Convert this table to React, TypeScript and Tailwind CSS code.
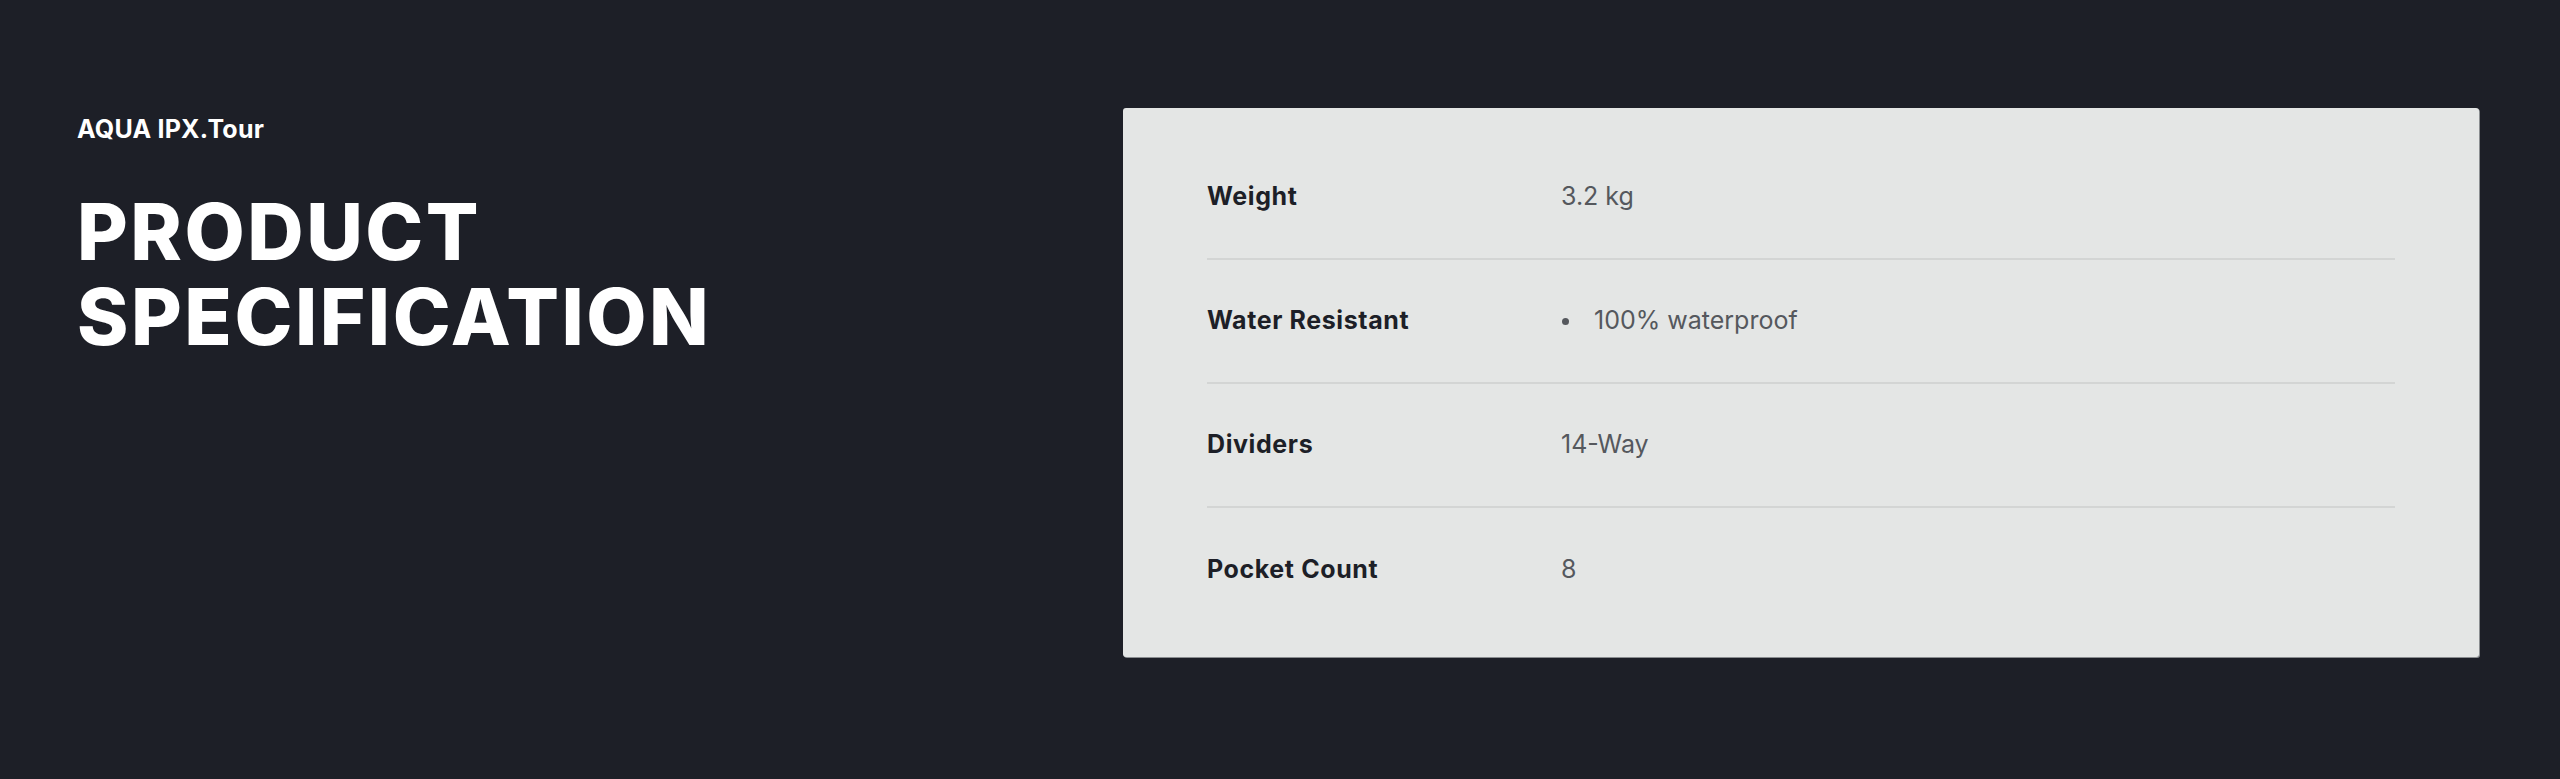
const specs = [
  { label: "Weight", value: "3.2 kg" },
  { label: "Water Resistant", value: "100% waterproof", list: true },
  { label: "Dividers", value: "14-Way" },
  { label: "Pocket Count", value: "8" },
];

export default function App() {
  return (
    <div className="flex min-h-[779px] w-full bg-[#1d1f27] pl-[77px] pr-[81px] pt-[108px] font-['Inter',sans-serif]">
      <div className="w-[1046px] shrink-0 pt-[6px]">
        <h3 className="text-[25px] font-bold leading-[30px] tracking-[0.2px] text-white">
          AQUA IPX.Tour
        </h3>
        <h2 className="mt-[45px] text-[78px] font-extrabold uppercase leading-[85px] tracking-[2.5px] text-white">
          Product
          <br />
          Specification
        </h2>
      </div>
      <div className="h-[549px] flex-1 rounded-[3px] bg-[#e4e6e5] px-[84px] pt-[28px] shadow-[1px_1px_0_#8a8d90]">
        {specs.map((s, i) => (
          <div
            key={s.label}
            className={
              i < specs.length - 1
                ? "flex h-[124px] items-center border-b-2 border-[#d3d5d4]"
                : "flex h-[124px] items-center"
            }
          >
            <div className="w-[354px] shrink-0 text-[25px] font-bold tracking-[0.6px] text-[#1d1f27]">
              {s.label}
            </div>
            {s.list ? (
              <ul className="flex items-center text-[25px] text-[#55585d]">
                <li className="flex items-center">
                  <span className="ml-[1px] mr-[25px] inline-block h-[7px] w-[7px] rounded-full bg-[#55585d]" />
                  {s.value}
                </li>
              </ul>
            ) : (
              <div className="text-[25px] text-[#55585d]">{s.value}</div>
            )}
          </div>
        ))}
      </div>
    </div>
  );
}
